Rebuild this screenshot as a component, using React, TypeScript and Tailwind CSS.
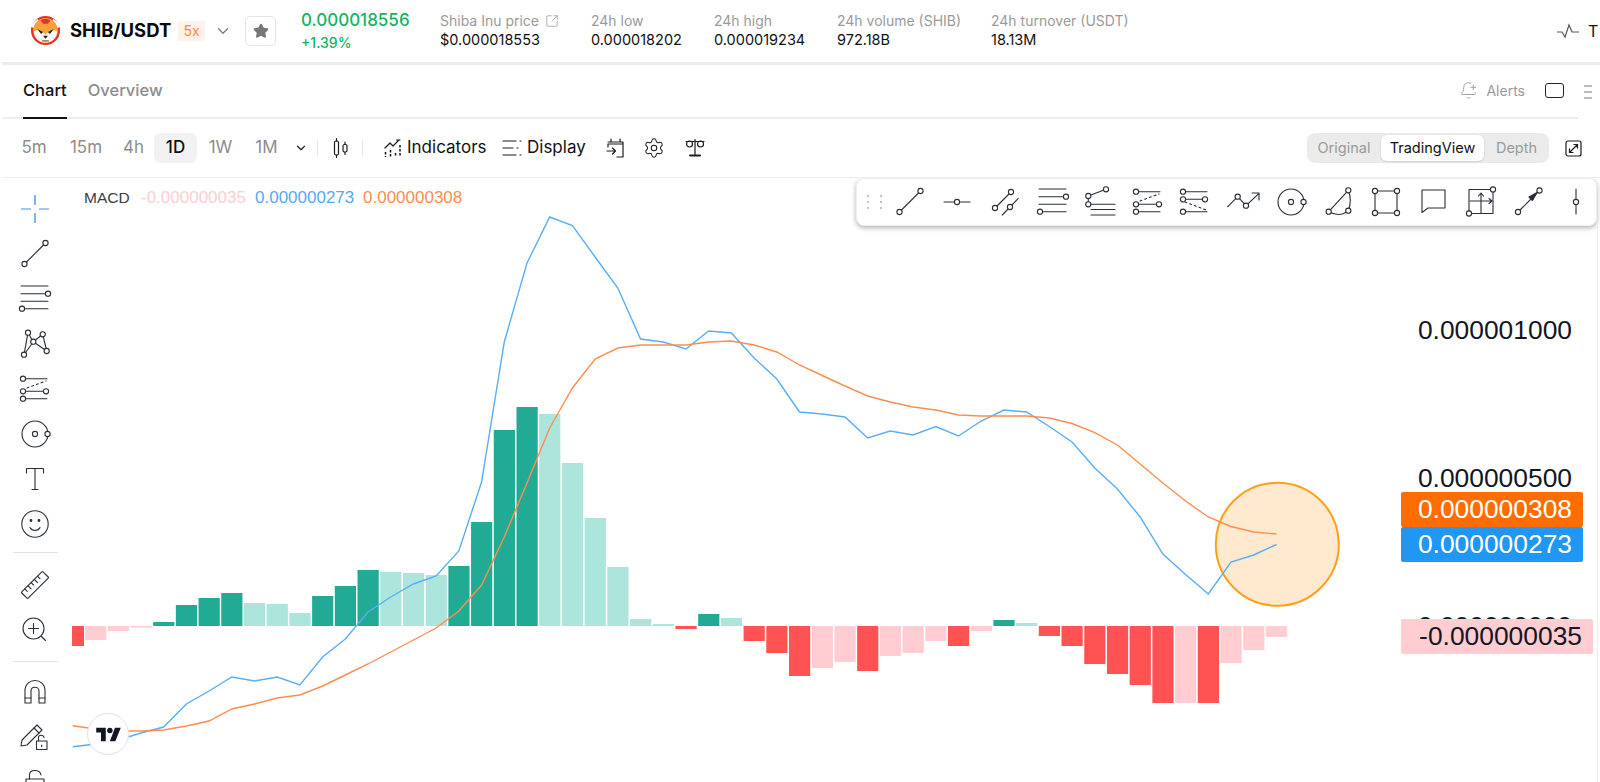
import type { ReactNode } from 'react';
import { BellPlus, ChevronDown, Settings, SquareArrowOutUpRight, Star } from 'lucide-react';

// per-bar MACD histogram, k = -1 is the clipped first bar
const hist: [number, 'd' | 'l' | 'r' | 'p'][] = [
  [-20, 'r'], [-14, 'p'], [-5, 'p'], [-1.5, 'p'],
  [4, 'd'], [21, 'd'], [28, 'd'], [33, 'd'], [23, 'l'], [22, 'l'], [13, 'l'], [30, 'd'], [40, 'd'], [56, 'd'],
  [54, 'l'], [53, 'l'], [51, 'l'], [60, 'd'], [104, 'd'], [196, 'd'], [219, 'd'], [212, 'l'], [163, 'l'], [108, 'l'], [59, 'l'], [7, 'l'],
  [2, 'l'], [-3, 'r'], [12, 'd'], [8, 'l'], [-15, 'r'], [-27, 'r'], [-50, 'r'], [-42, 'p'], [-36, 'p'], [-45, 'r'], [-30, 'p'], [-27, 'p'], [-15, 'p'], [-20, 'r'], [-5, 'p'],
  [6, 'd'], [3, 'l'], [-10, 'r'], [-20, 'r'], [-38, 'r'], [-48, 'r'], [-59, 'r'], [-77, 'r'], [-77, 'p'], [-77, 'r'], [-37, 'p'], [-24, 'p'], [-11, 'p'],
];

const blue = [746.7, 744, 740, 733, 727, 704, 691, 677, 681, 677, 685, 657, 639, 612, 597, 584, 576, 551, 482, 342, 263, 217, 225.5, 257, 288, 339, 342, 349, 331, 333, 358, 379, 412, 414, 417, 438, 431, 435, 426.5, 436, 421, 410, 412, 426.5, 442, 468, 489, 517, 554, 574.5, 594, 562, 555, 544.5];
const orange = [725.7, 729, 731, 731, 730, 726, 721, 709, 704, 698, 695, 686, 675, 664, 652, 640, 628, 611, 585, 537, 483, 428, 388, 359, 348, 345, 345, 345, 342, 341, 345, 352, 365, 375.5, 386, 396, 402, 407, 410, 415, 416, 416, 416, 418, 423.5, 432.7, 445, 464, 483, 501, 517, 526.5, 532, 534];

const barColor = { d: '#22ab94', l: '#ace5dc', r: '#ff5252', p: '#ffcdd2' };
const barX = (k: number) => 85 + 22.71 * k;
const points = (ys: number[]) => ys.map((y, i) => `${95.5 + 22.71 * (i - 1)},${y}`).join(' ');

function Ico({ children, size = 36 }: { children: ReactNode; size?: number }) {
  return (
    <svg width={size} height={size} viewBox={`${-size / 2} ${-size / 2} ${size} ${size}`} fill="none" stroke="#2a2e39" strokeWidth={1.1} strokeLinecap="round" strokeLinejoin="round">
      {children}
    </svg>
  );
}

function D({ x, y, r = 2.6 }: { x: number; y: number; r?: number }) {
  return <circle cx={x} cy={y} r={r} fill="#fff" />;
}

const TrendLine = () => (
  <Ico>
    <path d="M-10.5 10L10.5 -11" />
    <D x={-10.5} y={10} />
    <D x={10.5} y={-11} />
  </Ico>
);

const RayLine = () => (
  <Ico>
    <path d="M-13 0H13" />
    <D x={0} y={0} />
  </Ico>
);

const Parallel = () => (
  <Ico>
    <path d="M-10 6L6 -10M-2.7 13L13.3 -3.7" />
    <D x={-10} y={6} />
    <D x={6} y={-10} />
    <D x={5} y={5} />
  </Ico>
);

const FibLines = () => (
  <Ico>
    <path d="M-14 -13H13M-14 -5.3H13M-14 2.3H13M-13 9.7H13" />
    <D x={13} y={-5.3} />
    <D x={-13} y={9.7} />
  </Ico>
);

const FibWedge = () => (
  <Ico>
    <path d="M-11.7 -6L6 -12.7M-11.7 -6V2.3M-11 2.3H15M-9 7.5H15M-9 13H15" />
    <D x={6} y={-12.7} />
    <D x={-11.7} y={-6} />
    <D x={-11.7} y={2.3} />
  </Ico>
);

const Channel = () => (
  <Ico>
    <path d="M-12 -10.3H12M-12 2.3H11M-12 9.7H12" />
    <path d="M-8 -1L11 -8" strokeDasharray="2 3" />
    <D x={-12} y={-10.3} />
    <D x={-12} y={2.3} />
    <D x={11} y={2.3} />
    <D x={-12} y={9.7} />
  </Ico>
);

const ChannelB = () => (
  <Ico>
    <path d="M-12 -10.3H12M-12 -2.7H10M-12 9.7H12" />
    <path d="M-10 0L11 8" strokeDasharray="2 3" />
    <D x={-12} y={-10.3} />
    <D x={-12} y={-2.7} />
    <D x={10} y={-2.7} />
    <D x={-12} y={9.7} />
  </Ico>
);

const Zigzag = () => (
  <Ico>
    <path d="M-15.3 4.7L-5.3 -5.3L3 3.7L15.5 -8.2M9 -9H16V-2" />
    <D x={-5.3} y={-5.3} />
    <D x={3} y={3.7} />
  </Ico>
);

const Disk = () => (
  <Ico>
    <circle cx={0} cy={0} r={13} />
    <D x={0} y={0} />
    <D x={12.5} y={0} />
  </Ico>
);

const Curve = () => (
  <Ico>
    <path d="M-9.3 9.7L10.3 -11.7C13 -5 13 2 10.3 8.7C4 14 -3 13 -9.3 9.7Z" />
    <D x={-9.3} y={9.7} />
    <D x={10.3} y={-11.7} />
    <D x={10.3} y={8.7} />
  </Ico>
);

const Rect = () => (
  <Ico>
    <rect x={-11} y={-11} width={22} height={22} />
    <D x={-11} y={-11} />
    <D x={11} y={-11} />
    <D x={-11} y={11} />
    <D x={11} y={11} />
  </Ico>
);

const Bubble = () => (
  <Ico>
    <path d="M-11 -12H12V6H-5L-11 10.5Z" />
  </Ico>
);

const Forecast = () => (
  <Ico>
    <rect x={-12} y={-12.5} width={24} height={24} />
    <path d="M0 11.5V-8M-2.5 -6L0 -9L2.5 -6M-11 -1H10M8 -3.5L11 -1L8 1.5" />
    <D x={12} y={-12.5} />
    <D x={-12} y={11.5} />
  </Ico>
);

const ArrowTool = () => (
  <Ico>
    <path d="M-11 10L10 -11" />
    <path d="M8 -9.5L0 -5L3.5 -1.5Z" fill="#2a2e39" />
    <D x={-11} y={10} />
    <D x={10.5} y={-11.5} />
  </Ico>
);

const VLine = () => (
  <Ico>
    <path d="M0 -13V12" />
    <D x={0} y={0} />
  </Ico>
);

const Pitchfork = () => (
  <Ico>
    <path d="M-7 -11.3L-11 10.7L-1.7 -2.3L-7 -11.3M-1.7 -2.3L7.7 -9.7L11.7 7L-1.7 -2.3" />
    <D x={-7} y={-11.3} />
    <D x={7.7} y={-9.7} />
    <D x={-1.7} y={-2.3} />
    <D x={-11} y={10.7} />
    <D x={11.7} y={7} />
  </Ico>
);

const Crosshair = () => (
  <Ico>
    <path d="M-14 0H-4M4 0H14" stroke="#7cb8f2" strokeWidth={1.6} strokeLinecap="butt" />
    <path d="M0 -14V-4M0 4V14" stroke="#2f80dc" strokeWidth={1.2} strokeLinecap="butt" />
  </Ico>
);

const TextTool = () => (
  <Ico>
    <path d="M-8.5 -6V-10.5H8.5V-6M0 -10.5V10.5M-3 10.5H3" />
  </Ico>
);

const Smile = () => (
  <Ico>
    <circle cx={0} cy={0} r={13.2} />
    <path d="M-5 3.5C-3 7.5 3 7.5 5 3.5" />
    <circle cx={-4} cy={-3.5} r={0.9} fill="#2a2e39" />
    <circle cx={4} cy={-3.5} r={0.9} fill="#2a2e39" />
  </Ico>
);

const Ruler = () => (
  <Ico>
    <g transform="rotate(-45)">
      <rect x={-15} y={-4.5} width={30} height={9} rx={0.8} />
      <path d="M-10 -4.5V-1M-5.5 -4.5V0M-1 -4.5V-1M3.5 -4.5V0M8 -4.5V-1" />
    </g>
  </Ico>
);

const ZoomTool = () => (
  <Ico>
    <circle cx={-1.5} cy={-1.5} r={10.5} />
    <path d="M-1.5 -6.5V3.5M-6.5 -1.5H3.5M6.5 6.5L10.5 10.5" />
  </Ico>
);

const MagnetTool = () => (
  <Ico>
    <path d="M-10 11V-1C-10 -15 10 -15 10 -1V11H4V-1C4 -6 -4 -6 -4 -1V11Z" />
    <path d="M-10 6H-4M4 6H10" />
  </Ico>
);

const PencilLock = () => (
  <Ico>
    <path d="M-13 3L2 -12L7 -7L-8 8L-14 9Z" />
    <path d="M-1 -9L4 -4" />
    <rect x={1.5} y={4} width={10.5} height={8.5} />
    <path d="M3.5 4V0.5C3.5 -2.5 8.5 -2.5 9 0.5" />
    <path d="M6.7 8V9.5" />
  </Ico>
);

const LockTool = () => (
  <Ico>
    <rect x={-9} y={-3} width={18} height={15} />
    <path d="M-5.5 -3V-7C-5.5 -13 5 -13 6 -7" />
  </Ico>
);

function Divider() {
  return <div className="w-[45px] h-px bg-[#e0e3eb] shrink-0" />;
}

function LeftBar() {
  const top = [Crosshair, TrendLine, FibLines, Pitchfork, Channel, Disk, TextTool, Smile];
  const mid = [Ruler, ZoomTool];
  const bottom = [MagnetTool, PencilLock, LockTool];
  const Cell = ({ I }: { I: () => ReactNode }) => (
    <div className="h-[45px] w-full shrink-0 flex items-center justify-center">
      <I />
    </div>
  );
  return (
    <div className="w-[70px] shrink-0 pt-[8px] flex flex-col items-center overflow-hidden">
      {top.map((I, i) => <Cell key={i} I={I} />)}
      <div className="mt-[6px] mb-[9px]"><Divider /></div>
      {mid.map((I, i) => <Cell key={i} I={I} />)}
      <div className="mt-[9px] mb-[7px]"><Divider /></div>
      {bottom.map((I, i) => <Cell key={i} I={I} />)}
    </div>
  );
}

function DrawBar() {
  const tools = [TrendLine, RayLine, Parallel, FibLines, FibWedge, Channel, ChannelB, Zigzag, Disk, Curve, Rect, Bubble, Forecast, ArrowTool, VLine];
  return (
    <div className="absolute left-[786px] top-0 w-[741px] h-[48px] bg-white rounded-lg border border-[#eeeeee] shadow-[0_2px_5px_rgba(0,0,0,0.3)] flex items-center">
      <div className="w-[29px] shrink-0 pl-[10px] grid grid-cols-2 gap-x-[6px] gap-y-[4px]">
        {[0, 1, 2, 3, 4, 5].map(i => <span key={i} className="w-[2px] h-[2px] bg-[#c4c4c4]" />)}
      </div>
      {tools.map((I, i) => (
        <div key={i} className="w-[47.6px] shrink-0 flex items-center justify-center"><I /></div>
      ))}
    </div>
  );
}

function Stat({ label, value, w, link }: { label: string; value: string; w: string; link?: boolean }) {
  return (
    <div className={`${w} shrink-0`}>
      <div className="flex items-center gap-[6px] text-[14px] leading-[20px] text-[#9a9a9a]">
        {label}
        {link && <SquareArrowOutUpRight size={14} strokeWidth={1.3} />}
      </div>
      <div className="text-[14.5px] leading-[20px] text-[#111] mt-[-1px]">{value}</div>
    </div>
  );
}

function ShibLogo() {
  return (
    <svg width="31" height="31" viewBox="0 0 32 32" className="shrink-0">
      <circle cx="16" cy="16" r="15" fill="#e8302a" />
      <path d="M0.5 12C3 7 6 5 8 4L11 9L5 14ZM31.5 12C29 7 26 5 24 4L21 9L27 14Z" fill="#fff" />
      <circle cx="16" cy="16" r="12.8" fill="#f7a23a" />
      <path d="M11 6C13 3.5 19 3.5 21 6L18.5 9H13.5Z" fill="#e8302a" />
      <path d="M4 17C8 14.5 12.5 16 16 20.5C19.5 16 24 14.5 28 17C27.5 24.5 22 28.5 16 28.5C10 28.5 4.5 24.5 4 17Z" fill="#fff" />
      <path d="M7.5 14.5L13.5 17.5L11.5 19.5ZM24.5 14.5L18.5 17.5L20.5 19.5Z" fill="#2b1a10" />
      <path d="M13.5 21.5H18.5L16 24.5Z" fill="#2b1a10" />
      <path d="M12.5 26H19.5V27.5H12.5Z" fill="#8a6a60" />
    </svg>
  );
}

function Header() {
  return (
    <div className="h-[65px] shrink-0 ml-[2px] border-b-[3px] border-[#ececec] flex items-center pl-[28px] pb-[1px]">
      <ShibLogo />
      <span className="ml-[9px] text-[18.5px] font-bold text-[#0a0a0a] w-[103px] shrink-0 whitespace-nowrap">SHIB/USDT</span>
      <span className="ml-[5px] w-[27px] h-[20px] bg-[#fff2ea] text-[#ff8a3c] text-[14px] flex items-center justify-center shrink-0">5x</span>
      <ChevronDown size={18} strokeWidth={1.6} className="ml-[9px] text-[#777] shrink-0" />
      <div className="ml-[13px] w-[31px] h-[30px] rounded-[5px] border border-[#e4e4e4] flex items-center justify-center shrink-0">
        <Star size={16} className="text-[#777]" fill="#777" />
      </div>
      <div className="ml-[25px] w-[139px] shrink-0">
        <div className="text-[17px] leading-[22px] font-medium text-[#16b364]">0.000018556</div>
        <div className="text-[14px] leading-[20px] font-medium text-[#16b364] mt-[2px]">+1.39%</div>
      </div>
      <Stat label="Shiba Inu price" value="$0.000018553" w="w-[151px]" link />
      <Stat label="24h low" value="0.000018202" w="w-[123px]" />
      <Stat label="24h high" value="0.000019234" w="w-[123px]" />
      <Stat label="24h volume (SHIB)" value="972.18B" w="w-[154px]" />
      <Stat label="24h turnover (USDT)" value="18.13M" w="w-[566px]" />
      <svg width="22" height="18" viewBox="0 0 22 18" fill="none" stroke="#555" strokeWidth="1.2" className="shrink-0">
        <path d="M0 10H5L8 15L12 3L15 10H22" />
      </svg>
      <span className="ml-[9px] text-[16px] text-[#111]">T</span>
    </div>
  );
}

function Tabs() {
  return (
    <div className="h-[54px] shrink-0 ml-[2px] flex">
      <div className="w-[1576px] border-b-2 border-[#eeeeee] flex items-stretch pl-[21px]">
        <div className="h-[54px] border-b-2 border-[#111] flex items-center text-[16.5px] font-medium text-[#111] pb-[2px]">Chart</div>
        <div className="ml-[21px] flex items-center text-[16.5px] font-medium text-[#8c8c8c] pb-[2px]">Overview</div>
        <div className="ml-auto flex items-center text-[#9a9a9a] text-[14px] pb-[2px]">
          <BellPlus size={19} strokeWidth={1.2} />
          <span className="ml-[8px]">Alerts</span>
          <span className="ml-[20px] mr-[14px] w-[19px] h-[15px] rounded-[3px] border-[1.5px] border-[#1b2340]" />
        </div>
      </div>
      <div className="flex flex-col justify-center gap-[4px] pl-[6px]">
        <span className="w-[8px] h-[2px] bg-[#bbb]" />
        <span className="w-[8px] h-[2px] bg-[#bbb]" />
        <span className="w-[8px] h-[2px] bg-[#bbb]" />
      </div>
    </div>
  );
}

function ToolIcon({ children }: { children: ReactNode }) {
  return (
    <svg width="22" height="22" viewBox="0 0 22 22" fill="none" stroke="#1c1c1c" strokeWidth="1.2" strokeLinecap="round" strokeLinejoin="round" className="shrink-0">
      {children}
    </svg>
  );
}

function Toolbar() {
  const tf = 'text-[17px] text-[#8c8c8c] flex items-center justify-center';
  return (
    <div className="h-[59px] shrink-0 ml-[2px] border-b border-[#eeeeee] flex items-center pl-[19px]">
      <span className={`${tf} w-[26px]`}>5m</span>
      <span className={`${tf} ml-[21px] w-[36px]`}>15m</span>
      <span className={`${tf} ml-[19px] w-[21px]`}>4h</span>
      <span className="ml-[10px] w-[43px] h-[30px] rounded-[6px] bg-[#f2f2f2] text-[17px] font-medium text-[#111] flex items-center justify-center">1D</span>
      <span className={`${tf} ml-[10px] w-[27px]`}>1W</span>
      <span className={`${tf} ml-[20px] w-[25px]`}>1M</span>
      <ChevronDown size={14} strokeWidth={2} className="ml-[15px] text-[#222]" />
      <span className="ml-[9px] w-px h-[16px] bg-[#e8e8e8]" />
      <div className="ml-[12px]">
        <ToolIcon>
          <path d="M6.5 1.5V4M6.5 18V20.5M15 5V7.5M15 15V17.5" />
          <rect x="4.5" y="4" width="4" height="14" rx="1.5" />
          <rect x="13" y="7.5" width="4" height="7.5" rx="1.5" />
        </ToolIcon>
      </div>
      <span className="ml-[10px] w-px h-[16px] bg-[#e8e8e8]" />
      <div className="ml-[19px]">
        <ToolIcon>
          <path d="M3 11L8 6L11 9L17 3M14.5 3H18" />
          <path d="M3.5 15V20M8.5 13V20M13.5 16V20M18 8V20" strokeWidth="1.6" strokeDasharray="2.5 1.5" strokeLinecap="butt" />
        </ToolIcon>
      </div>
      <span className="ml-[3px] w-[78px] text-[17px] text-[#111] whitespace-nowrap">Indicators</span>
      <div className="ml-[16px]">
        <ToolIcon>
          <path d="M2 4H15M2 11H12M2 18H15" />
          <path d="M19 4H20M16 11H17M19 18H20" />
        </ToolIcon>
      </div>
      <span className="ml-[4px] w-[57px] text-[17px] text-[#111] whitespace-nowrap">Display</span>
      <div className="ml-[21px]">
        <ToolIcon>
          <path d="M6 2V5M15 2V5M3 5H18V7H3V10M18 7V20H12M2 14H10M7.5 11L10.5 14L7.5 17" />
        </ToolIcon>
      </div>
      <Settings size={22} strokeWidth={1.1} className="ml-[16px] text-[#1c1c1c] shrink-0" />
      <div className="ml-[19px]">
        <ToolIcon>
          <path d="M2 4.5H20M11 2.5V18" />
          <path d="M6 18.5H16" strokeWidth="2" />
          <circle cx="5.5" cy="7" r="3" />
          <circle cx="16.5" cy="7" r="3" />
        </ToolIcon>
      </div>
      <div className="ml-auto w-[242px] h-[30px] rounded-[8px] bg-[#ebebeb] flex items-center text-[14.5px] text-[#9a9a9a] shrink-0">
        <span className="w-[74px] text-center">Original</span>
        <span className="w-[103px] h-[26px] rounded-[6px] bg-white text-[#111] shadow-sm flex items-center justify-center">TradingView</span>
        <span className="flex-1 text-center">Depth</span>
      </div>
      <svg width="17" height="17" viewBox="0 0 17 17" fill="none" stroke="#1c1c1c" strokeWidth="1.2" className="ml-[16px] mr-[18px] shrink-0">
        <rect x="1" y="1" width="15" height="15" rx="2" />
        <path d="M5 12L12 5M8.5 4.5H12.5V8.5M4.5 8.5V12.5H8.5" />
      </svg>
    </div>
  );
}

function AxisLabel({ top, text, className }: { top: string; text: string; className: string }) {
  return (
    <div className={`absolute ${top} ${className} h-[35px] flex items-center justify-end text-[26.4px] leading-none rounded-[2px]`}>
      {text}
    </div>
  );
}

function MacdChart() {
  return (
    <div className="relative flex-1 overflow-hidden font-['Liberation_Sans',sans-serif]">
      <svg width="1530" height="604" viewBox="70 178 1530 604" className="absolute inset-0">
        <line x1="1597.5" y1="226" x2="1597.5" y2="782" stroke="#eeeeee" />
        {hist.map(([h, c], i) => {
          const k = i - 1;
          const x = k < 0 ? 72 : barX(k);
          const w = k < 0 ? 12 : 21.2;
          return (
            <rect
              key={i}
              x={x}
              y={h > 0 ? 626 - h : 626}
              width={w}
              height={Math.abs(h)}
              fill={barColor[c]}
            />
          );
        })}
        <circle cx="1277.3" cy="544.3" r="61.5" fill="#ffead0" stroke="#ff9f1a" strokeWidth="2" />
        <polyline points={points(blue)} fill="none" stroke="#5aaef5" strokeWidth="1.4" clipPath="url(#plot)" />
        <polyline points={points(orange)} fill="none" stroke="#ff8d4f" strokeWidth="1.4" clipPath="url(#plot)" />
        <defs>
          <clipPath id="plot">
            <rect x="72" y="178" width="1300" height="604" />
          </clipPath>
        </defs>
      </svg>

      <div className="absolute left-[14px] top-[10px] flex items-center text-[17px] leading-[20px]">
        <span className="text-[#3a3d45] w-[57px] text-[15.5px]">MACD</span>
        <span className="text-[#ffcdd2] w-[114px]">-0.000000035</span>
        <span className="text-[#57a9f2] w-[108px]">0.000000273</span>
        <span className="text-[#ff8d4f]">0.000000308</span>
      </div>

      <DrawBar />

      <AxisLabel top="top-[135px]" text="0.000001000" className="left-[1330px] w-[172px] text-[#131722]" />
      <AxisLabel top="top-[283px]" text="0.000000500" className="left-[1330px] w-[172px] text-[#131722]" />
      <AxisLabel top="top-[314px]" text="0.000000308" className="left-[1331px] w-[182px] pr-[11px] bg-[#ff6d00] text-white" />
      <AxisLabel top="top-[349px]" text="0.000000273" className="left-[1331px] w-[182px] pr-[11px] bg-[#2196f3] text-white" />
      <AxisLabel top="top-[431px]" text="0.000000000" className="left-[1330px] w-[172px] text-[#131722]" />
      <AxisLabel top="top-[441px]" text="-0.000000035" className="left-[1331px] w-[192px] pr-[11px] bg-[#ffcdd2] text-[#131722]" />

      <div className="absolute left-[17px] top-[535px] w-[42px] h-[42px] rounded-full bg-white border-[1.5px] border-[#e0e3eb] flex items-center justify-center">
        <svg width="27" height="15" viewBox="0 0 36 22" fill="#131722">
          <path d="M14 21H7V8H0V1H14V21Z" />
          <path d="M28 21H20L27.5 1H36L28 21Z" />
          <circle cx="20" cy="5" r="4" />
        </svg>
      </div>
    </div>
  );
}

export default function App() {
  return (
    <div className="w-[1600px] h-[782px] overflow-hidden bg-white flex flex-col font-['Inter',sans-serif]">
      <Header />
      <Tabs />
      <Toolbar />
      <div className="flex-1 min-h-0 flex">
        <LeftBar />
        <MacdChart />
      </div>
    </div>
  );
}
